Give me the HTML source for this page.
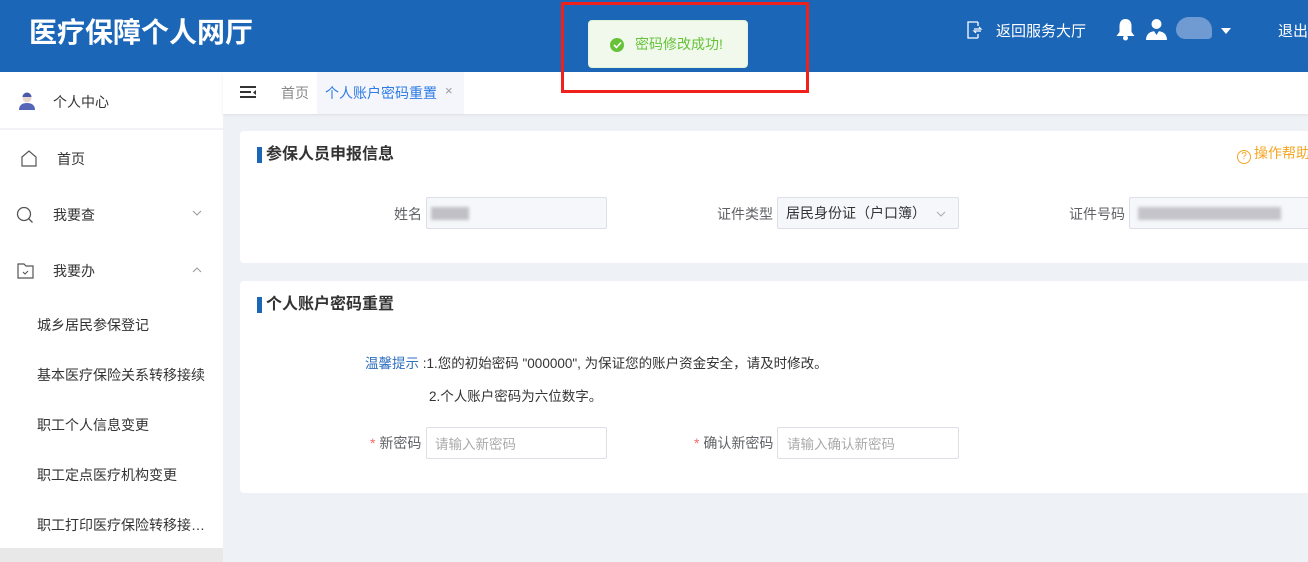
<!DOCTYPE html>
<html><head><meta charset="utf-8"><style>
*{box-sizing:border-box;margin:0;padding:0}
body{width:1308px;height:562px;overflow:hidden;background:#eef1f5;font-family:"Liberation Sans","Noto Sans CJK SC",sans-serif;font-size:14px;color:#333;position:relative}
.hd{position:absolute;left:0;top:0;width:1308px;height:72px;background:#1c66b8;color:#fff}
.logo{position:absolute;left:29px;top:11px;font-size:28px;font-weight:bold}
.ab{position:absolute}
.side{position:absolute;left:0;top:72px;width:223px;height:476px;background:#fff}
.sideb{position:absolute;left:0;top:548px;width:223px;height:14px;background:#e8e8e8}
.tabs{position:absolute;left:223px;top:72px;width:1085px;height:42px;background:#fff;box-shadow:0 1px 3px rgba(0,0,0,.08)}
.card{position:absolute;left:240px;width:1080px;background:#fff;border-radius:4px}
.ttl{position:absolute;left:17px;font-size:16px;font-weight:bold;color:#333;padding-left:9px;line-height:18px}
.ttl:before{content:"";position:absolute;left:0;top:1px;width:5px;height:16px;background:#1c66b8}
.inp{position:absolute;height:32px;border:1px solid #dcdfe6;border-radius:2px;background:#f5f7fa}
.lbl{position:absolute;color:#606266;font-size:14px;text-align:right}
.mi{position:absolute;left:37px;font-size:14px;color:#333}
</style></head><body>
<div class="hd">
 <div class="logo">医疗保障个人网厅</div>
 <svg class="ab" style="left:967px;top:21px" width="16" height="18" viewBox="0 0 16 18"><path d="M11 1H1v16h10M11 13v4M11 1v4" fill="none" stroke="#fff" stroke-width="1.3"/><path d="M7 8h7l-2-2M14 10H7l2 2" fill="none" stroke="#fff" stroke-width="1.2"/></svg>
 <div class="ab" style="left:996px;top:20px;font-size:15px">返回服务大厅</div>
 <svg class="ab" style="left:1114px;top:17px" width="23" height="25" viewBox="0 0 23 25"><path d="M11.5 2c-4 0-6 3-6 7v6l-3 4h18l-3-4V9c0-4-2-7-6-7z" fill="#fff"/><circle cx="11.5" cy="21" r="2.5" fill="#fff"/></svg>
 <svg class="ab" style="left:1146px;top:18px" width="21" height="22" viewBox="0 0 21 22"><circle cx="10.5" cy="6" r="5" fill="#fff"/><path d="M0 22c0-6 4-9 10.5-9S21 16 21 22z" fill="#fff"/><path d="M8 13l2.5 4 2.5-4" fill="#1c66b8"/></svg>
 <div class="ab" style="left:1176px;top:17px;width:36px;height:22px;border-radius:14px 14px 4px 10px;background:#6f9ad2"></div>
 <div class="ab" style="left:1221px;top:28px;width:0;height:0;border-left:5px solid transparent;border-right:5px solid transparent;border-top:6px solid #fff"></div>
 <div class="ab" style="left:1278px;top:20px;font-size:15px">退出</div>
</div>
<div class="ab" style="left:561px;top:2px;width:248px;height:91px;border:3px solid #f0201c;z-index:5"></div>
<div class="ab" style="left:588px;top:20px;width:160px;height:48px;background:#f0f9eb;border:1px solid #e1f3d8;border-radius:4px;z-index:6">
 <div class="ab" style="left:21px;top:17px;width:14px;height:14px;border-radius:50%;background:#67c23a"></div>
 <svg class="ab" style="left:24px;top:20px" width="9" height="8"><path d="M1 4l2.5 2.5L8 1.5" stroke="#fff" stroke-width="1.6" fill="none"/></svg>
 <div class="ab" style="left:46px;top:13px;color:#67c23a;font-size:14px">密码修改成功!</div>
</div>
<div class="side">
 <svg class="ab" style="left:18px;top:20px" width="18" height="18"><circle cx="9" cy="6" r="4.5" fill="#e8d6d0"/><path d="M4.5 5a4.5 4.5 0 019 0z" fill="#4b5aa8"/><path d="M1 18c0-5 3.5-7 8-7s8 2 8 7z" fill="#5565b8"/></svg>
 <div class="ab" style="left:53px;top:20px;font-size:14px">个人中心</div>
 <div class="ab" style="left:0;top:56px;width:223px;height:2px;background:#f0f2f5"></div>
 <svg class="ab" style="left:21px;top:78px" width="16" height="17"><path d="M1 7L8 1l7 6v9H1z" fill="none" stroke="#555" stroke-width="1.2"/></svg>
 <div class="ab" style="left:57px;top:77px">首页</div>
 <svg class="ab" style="left:16px;top:134px" width="18" height="18"><circle cx="8" cy="8" r="6.5" fill="none" stroke="#555" stroke-width="1.3"/><path d="M12.5 12.5l4 4" stroke="#555" stroke-width="1.3"/></svg>
 <div class="ab" style="left:53px;top:133px">我要查</div>
 <svg class="ab" style="left:192px;top:138px" width="10" height="6"><path d="M1 1l4 4 4-4" fill="none" stroke="#999" stroke-width="1"/></svg>
 <svg class="ab" style="left:17px;top:191px" width="17" height="16"><path d="M1 1h6l2 2h7v12H1z" fill="none" stroke="#555" stroke-width="1.2"/><path d="M6 9l2 2 3-3" fill="none" stroke="#555" stroke-width="1.1"/></svg>
 <div class="ab" style="left:53px;top:189px">我要办</div>
 <svg class="ab" style="left:192px;top:195px" width="10" height="6"><path d="M1 5l4-4 4 4" fill="none" stroke="#999" stroke-width="1"/></svg>
 <div class="mi" style="top:243px">城乡居民参保登记</div>
 <div class="mi" style="top:293px">基本医疗保险关系转移接续</div>
 <div class="mi" style="top:343px">职工个人信息变更</div>
 <div class="mi" style="top:393px">职工定点医疗机构变更</div>
 <div class="mi" style="top:443px">职工打印医疗保险转移接…</div>
</div>
<div class="sideb"></div>
<div class="tabs">
 <svg class="ab" style="left:17px;top:14px" width="17" height="14"><path d="M0 1h16M0 6h11M0 11h16" stroke="#333" stroke-width="2"/><path d="M16 4v5l-3-2.5z" fill="#333"/></svg>
 <div class="ab" style="left:58px;top:11px;color:#888">首页</div>
 <div class="ab" style="left:94px;top:0;width:147px;height:42px;background:#f4f6fb"></div>
 <div class="ab" style="left:102px;top:11px;color:#2d7be5">个人账户密码重置</div>
 <div class="ab" style="left:222px;top:11px;color:#999;font-size:13px">×</div>
</div>
<div class="card" style="top:131px;height:132px">
 <div class="ttl" style="top:15px">参保人员申报信息</div>
 <div class="ab" style="left:997px;top:12px;color:#f5a623;font-size:14px"><span style="display:inline-block;width:14px;height:14px;border:1px solid #f5a623;border-radius:50%;font-size:10px;text-align:center;line-height:12px;margin-right:3px;vertical-align:-1px">?</span>操作帮助</div>
 <div class="lbl" style="left:154px;top:73px">姓名</div>
 <div class="inp" style="left:186px;top:66px;width:181px"><div class="ab" style="left:4px;top:9px;width:38px;height:13px;background:#c0c0c6;filter:blur(1.5px)"></div></div>
 <div class="lbl" style="left:477px;top:73px">证件类型</div>
 <div class="inp" style="left:537px;top:66px;width:182px"><div class="ab" style="left:8px;top:5px;color:#333">居民身份证（户口簿）</div><svg class="ab" style="left:158px;top:13px" width="10" height="6"><path d="M1 1l4 4 4-4" fill="none" stroke="#aaa"/></svg></div>
 <div class="lbl" style="left:829px;top:73px">证件号码</div>
 <div class="inp" style="left:889px;top:66px;width:200px"><div class="ab" style="left:8px;top:9px;width:143px;height:13px;background:#c4c4ca;filter:blur(1.5px)"></div></div>
</div>
<div class="card" style="top:281px;height:212px">
 <div class="ttl" style="top:15px">个人账户密码重置</div>
 <div class="ab" style="left:125px;top:71px;font-size:13.5px"><span style="color:#2d6fc0">温馨提示</span> :1.您的初始密码 "000000", 为保证您的账户资金安全，请及时修改。</div>
 <div class="ab" style="left:189px;top:104px;font-size:13.5px">2.个人账户密码为六位数字。</div>
 <div class="lbl" style="left:130px;top:152px"><span style="color:#f56c6c">* </span>新密码</div>
 <div class="inp" style="left:186px;top:146px;width:181px;background:#fff"><div class="ab" style="left:8px;top:5px;color:#aaa;font-size:13.5px">请输入新密码</div></div>
 <div class="lbl" style="left:454px;top:152px"><span style="color:#f56c6c">* </span>确认新密码</div>
 <div class="inp" style="left:537px;top:146px;width:182px;background:#fff"><div class="ab" style="left:9px;top:5px;color:#aaa;font-size:13.5px">请输入确认新密码</div></div>
</div>
</body></html>
